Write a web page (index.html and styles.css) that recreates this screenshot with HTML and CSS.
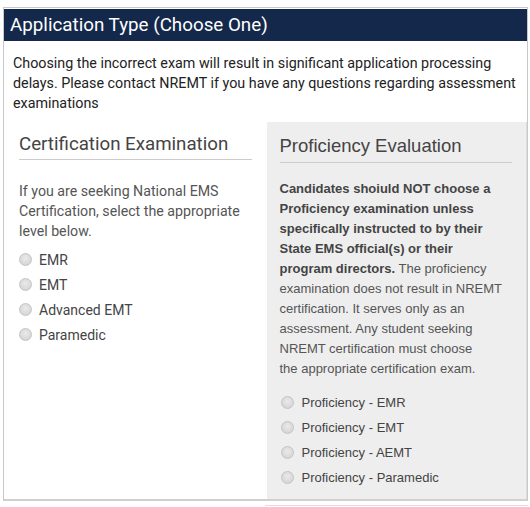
FILE: index.html
```html
<!DOCTYPE html>
<html>
<head>
<meta charset="utf-8">
<link rel="stylesheet" href="styles.css">
</head>
<body>
<div class="panel">
  <div class="panel-head">Application Type (Choose One)</div>
  <p class="intro">Choosing the incorrect exam will result in significant application processing delays. Please contact NREMT if you have any questions regarding assessment examinations</p>
  <div class="cols">
    <div class="col cert">
      <h2 class="col-title">Certification Examination</h2>
      <p class="cert-text">If you are seeking National EMS Certification, select the appropriate level below.</p>
      <ul class="opts">
        <li><span class="radio"></span>EMR</li>
        <li><span class="radio"></span>EMT</li>
        <li><span class="radio"></span>Advanced EMT</li>
        <li><span class="radio"></span>Paramedic</li>
      </ul>
    </div>
    <div class="col prof">
      <h2 class="col-title">Proficiency Evaluation</h2>
      <p class="prof-text"><b>Candidates shoiuld NOT choose a<br>Proficiency examination unless<br>specifically instructed to by their<br>State EMS official(s) or their<br>program directors.</b> The proficiency<br>examination does not result in NREMT<br>certification. It serves only as an<br>assessment. Any student seeking<br>NREMT certification must choose<br>the appropriate certification exam.</p>
      <ul class="opts">
        <li><span class="radio"></span>Proficiency - EMR</li>
        <li><span class="radio"></span>Proficiency - EMT</li>
        <li><span class="radio"></span>Proficiency - AEMT</li>
        <li><span class="radio"></span>Proficiency - Paramedic</li>
      </ul>
    </div>
  </div>
</div>
<div class="next"></div>
</body>
</html>
```
FILE: styles.css
```css
html, body { margin: 0; padding: 0; background: #fff; }
body { padding-top: 7px; font-family: Roboto, "Liberation Sans", sans-serif; }

.panel {
  margin-left: 3px;
  width: 525px;
  border: 1px solid #c8c8c8;
  border-bottom: 2px solid #d0d0d0;
  box-sizing: border-box;
}
.panel-head {
  background: #13284b;
  color: #fff;
  font-size: 18.8px;
  height: 32px;
  line-height: 32px;
  padding-left: 6px;
  margin-top: 1px;
}
.intro {
  margin: 0;
  padding: 12px 9px 9px 9px;
  font-size: 14.3px;
  font-weight: 400;
  line-height: 20px;
  color: #222;
}
.cols { display: flex; }
.col { flex: 1; }
.cert { padding: 0 15px 0 15px; }
.prof {
  background: #eeeeee;
  padding: 0 14px 9px 13px;
  font-family: "Liberation Sans", Arial, sans-serif;
  border-right: 1px solid #ddd;
}
.col-title {
  margin: 0;
  font-weight: 400;
  color: #444;
  border-bottom: 1px solid #ccc;
}
.cert .col-title { font-size: 18.7px; padding: 11px 0 4px 0; }
.prof .col-title { font-size: 18.5px; padding: 13px 0 5px 0; }
.cert-text {
  margin: 21px 0 0 0;
  font-size: 14.2px;
  line-height: 20px;
  color: #555;
}
.prof-text {
  margin: 16px 0 0 0;
  font-size: 13px;
  line-height: 20px;
  color: #555;
  white-space: nowrap;
}
.prof-text b { color: #444; }
.opts { list-style: none; margin: 6px 0 0 0; padding: 0; }
.prof .opts { margin-top: 11px; }
.opts li {
  display: flex;
  align-items: center;
  height: 25px;
  font-size: 14px;
  color: #444;
}
.prof .opts li { font-size: 13px; }
.radio {
  width: 11px;
  height: 11px;
  border-radius: 50%;
  border: 1px solid #c4c4c4;
  background: radial-gradient(circle at 50% 40%, #eaeaea, #cfcfcf);
  margin: 0 7px 0 0;
  flex: none;
}
.prof .radio { margin-left: 1px; margin-right: 8px; }
.next {
  margin-left: 265px;
  margin-top: 4px;
  width: 263px;
  border-top: 1px solid #ddd;
}
```
